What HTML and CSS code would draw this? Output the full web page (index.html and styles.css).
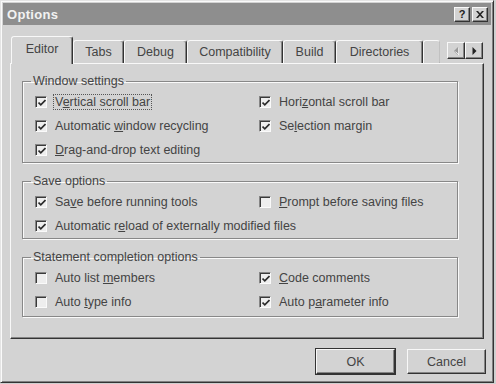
FILE: index.html
```html
<!DOCTYPE html>
<html>
<head>
<meta charset="utf-8">
<title>Options</title>
<link rel="stylesheet" href="styles.css">
</head>
<body>
<div class="dialog">
  <div class="titlebar">
    <span class="title">Options</span>
    <div class="tb-btns">
      <span class="tb-btn raised">?</span>
      <span class="tb-btn raised close">
        <svg width="8" height="7" viewBox="0 0 8 7"><path d="M0 0h2l2 2.3L6 0h2L5 3.5 8 7H6L4 4.7 2 7H0l3-3.5z" fill="#222"/></svg>
      </span>
    </div>
  </div>

  <div class="tabstrip">
    <div class="tab active w-editor">Editor</div>
    <div class="tab w-tabs">Tabs</div>
    <div class="tab w-debug">Debug</div>
    <div class="tab w-compat">Compatibility</div>
    <div class="tab w-build">Build</div>
    <div class="tab w-dirs">Directories</div>
    <div class="tab partial"></div>
    <div class="arrows">
      <span class="arrow raised disabled"><svg width="5" height="8" viewBox="0 0 5 8"><path d="M4 0v8L0 4z" fill="#9a9a9a"/><path d="M5 1v7L1.5 4.5" fill="none" stroke="#fafafa" stroke-width="0.8"/></svg></span>
      <span class="arrow raised"><svg width="5" height="8" viewBox="0 0 5 8"><path d="M0.5 0v8L4.5 4z" fill="#222"/></svg></span>
    </div>
  </div>

  <div class="panel">
    <fieldset class="group">
      <legend>Window settings</legend>
      <div class="grid">
        <label class="cb"><span class="box checked"><svg width="8" height="8" viewBox="0 0 8 8"><path d="M0.5 3.5l2.3 2.3L7.5 1" fill="none" stroke="#2a2a2a" stroke-width="1.7"/></svg></span><span class="focus">V<u>e</u>rtical scroll bar</span></label>
        <label class="cb"><span class="box checked"><svg width="8" height="8" viewBox="0 0 8 8"><path d="M0.5 3.5l2.3 2.3L7.5 1" fill="none" stroke="#2a2a2a" stroke-width="1.7"/></svg></span><span>Hori<u>z</u>ontal scroll bar</span></label>
        <label class="cb"><span class="box checked"><svg width="8" height="8" viewBox="0 0 8 8"><path d="M0.5 3.5l2.3 2.3L7.5 1" fill="none" stroke="#2a2a2a" stroke-width="1.7"/></svg></span><span>Automatic <u>w</u>indow recycling</span></label>
        <label class="cb"><span class="box checked"><svg width="8" height="8" viewBox="0 0 8 8"><path d="M0.5 3.5l2.3 2.3L7.5 1" fill="none" stroke="#2a2a2a" stroke-width="1.7"/></svg></span><span>Se<u>l</u>ection margin</span></label>
        <label class="cb"><span class="box checked"><svg width="8" height="8" viewBox="0 0 8 8"><path d="M0.5 3.5l2.3 2.3L7.5 1" fill="none" stroke="#2a2a2a" stroke-width="1.7"/></svg></span><span><u>D</u>rag-and-drop text editing</span></label>
      </div>
    </fieldset>

    <fieldset class="group">
      <legend>Save options</legend>
      <div class="grid">
        <label class="cb"><span class="box checked"><svg width="8" height="8" viewBox="0 0 8 8"><path d="M0.5 3.5l2.3 2.3L7.5 1" fill="none" stroke="#2a2a2a" stroke-width="1.7"/></svg></span><span>Sa<u>v</u>e before running tools</span></label>
        <label class="cb"><span class="box"></span><span><u>P</u>rompt before saving files</span></label>
        <label class="cb span2"><span class="box checked"><svg width="8" height="8" viewBox="0 0 8 8"><path d="M0.5 3.5l2.3 2.3L7.5 1" fill="none" stroke="#2a2a2a" stroke-width="1.7"/></svg></span><span>Automatic r<u>e</u>load of externally modified files</span></label>
      </div>
    </fieldset>

    <fieldset class="group last">
      <legend>Statement completion options</legend>
      <div class="grid">
        <label class="cb"><span class="box"></span><span>Auto list <u>m</u>embers</span></label>
        <label class="cb"><span class="box checked"><svg width="8" height="8" viewBox="0 0 8 8"><path d="M0.5 3.5l2.3 2.3L7.5 1" fill="none" stroke="#2a2a2a" stroke-width="1.7"/></svg></span><span><u>C</u>ode comments</span></label>
        <label class="cb"><span class="box"></span><span>Auto <u>t</u>ype info</span></label>
        <label class="cb"><span class="box checked"><svg width="8" height="8" viewBox="0 0 8 8"><path d="M0.5 3.5l2.3 2.3L7.5 1" fill="none" stroke="#2a2a2a" stroke-width="1.7"/></svg></span><span>Auto p<u>a</u>rameter info</span></label>
      </div>
    </fieldset>
  </div>

  <div class="actions">
    <span class="btn raised default">OK</span>
    <span class="btn raised">Cancel</span>
  </div>
</div>
</body>
</html>
```

FILE: styles.css
```css
* { box-sizing: border-box; }

body {
  margin: 0;
  background: #d0d0d0;
  font-family: "Liberation Sans", Arial, sans-serif;
  font-size: 12.5px;
  color: #444;
}

.dialog {
  width: 494px;
  height: 383px;
  background: #d3d3d3;
  border: 1px solid;
  border-color: #e4e4e4 #333 #333 #e4e4e4;
  box-shadow: inset 1px 1px 0 #fafafa, inset -1px -1px 0 #808080;
  padding: 2px;
  display: flex;
  flex-direction: column;
}

.raised {
  background: #d3d3d3;
  border: 1px solid;
  border-color: #f8f8f8 #333 #333 #f8f8f8;
  box-shadow: inset -1px -1px 0 #858585;
}

/* title bar */
.titlebar {
  height: 22px;
  background: #8e8e8e;
  display: flex;
  align-items: center;
  padding: 0 3px 0 4px;
}
.title {
  color: #f2f2f2;
  font-weight: bold;
  font-size: 13px;
  letter-spacing: 0.3px;
}
.tb-btns {
  margin-left: auto;
  display: flex;
  gap: 2px;
}
.tb-btn {
  width: 16px;
  height: 15px;
  display: flex;
  align-items: center;
  justify-content: center;
  font-weight: bold;
  font-size: 11px;
  color: #222;
  line-height: 1;
}

/* tabs */
.tabstrip {
  margin: 11px 0 0 8px;
  width: 472px;
  height: 27px;
  display: flex;
  align-items: flex-end;
}
.tab {
  height: 23px;
  border: 1px solid;
  border-bottom: none;
  border-color: #f8f8f8 #333 transparent #f8f8f8;
  border-radius: 3px 3px 0 0;
  box-shadow: inset -1px 0 0 #858585;
  display: flex;
  align-items: center;
  justify-content: center;
  padding-bottom: 1px;
  color: #444;
}
.tab.active {
  height: 28px;
  margin-bottom: -1px;
  background: #d3d3d3;
  position: relative;
  z-index: 1;
  padding-bottom: 4px;
}
.w-editor { width: 62px; }
.w-tabs { width: 51px; }
.w-debug { width: 63px; }
.w-compat { width: 96px; }
.w-build { width: 53px; }
.w-dirs { width: 87px; }
.tab.partial {
  width: 17px;
  border-right: 1px dotted #b0b0b0;
  box-shadow: none;
}
.arrows {
  margin-left: auto;
  align-self: flex-start;
  margin-top: 6px;
  display: flex;
}
.arrow {
  width: 18px;
  height: 17px;
  display: flex;
  align-items: center;
  justify-content: center;
}

/* panel */
.panel {
  margin-left: 7px;
  width: 474px;
  height: 276px;
  border: 1px solid;
  border-color: #f8f8f8 #333 #333 #f8f8f8;
  box-shadow: inset -1px -1px 0 #858585;
  padding: 10px 25px 0 11px;
}

.group {
  margin: 0 0 11px 0;
  padding: 6px 0 4px 12px;
  border: 1px solid #888;
  box-shadow: inset 1px 1px 0 #fafafa, 1px 1px 0 #fafafa;
  min-width: 0;
}
.group.last {
  padding-bottom: 6px;
}
.group legend {
  padding: 0 2px;
  margin-left: -4px;
  line-height: 14px;
  color: #444;
}

.grid {
  display: grid;
  grid-template-columns: 224px 1fr;
  row-gap: 8px;
}
.cb {
  display: flex;
  align-items: center;
  height: 16px;
  gap: 8px;
  white-space: nowrap;
}
.span2 { grid-column: 1 / 3; }
.box {
  flex: none;
  width: 12px;
  height: 12px;
  background: #eeeeee;
  border: 1px solid;
  border-color: #858585 #fafafa #fafafa #858585;
  box-shadow: inset 1px 1px 0 #3a3a3a;
  display: flex;
  align-items: center;
  justify-content: center;
  padding: 1px 0 0 1px;
}
.focus {
  outline: 1px dotted #555;
  outline-offset: 0;
  padding: 0 1px;
  margin-left: -1px;
}
u { text-decoration-thickness: 1px; text-underline-offset: 1px; }

/* buttons */
.actions {
  display: flex;
  justify-content: flex-end;
  gap: 12px;
  margin-top: 10px;
  padding-right: 5px;
}
.btn {
  width: 79px;
  height: 25px;
  display: flex;
  align-items: center;
  justify-content: center;
  color: #444;
}
.btn.default {
  outline: 1px solid #333;
}
```
